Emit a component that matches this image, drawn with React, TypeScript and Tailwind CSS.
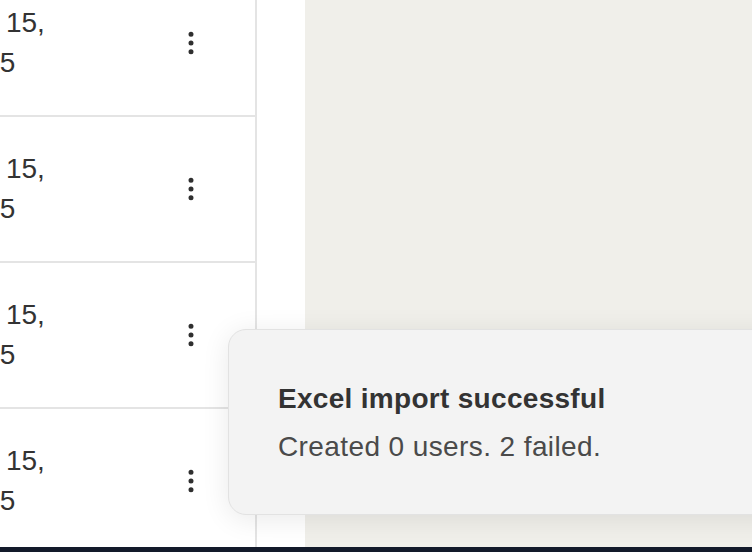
import React from "react";

const Kebab = () => (
  <svg width="30" height="30" viewBox="0 0 24 24" fill="none" stroke="#2f2f2f" strokeWidth="2" strokeLinecap="round" strokeLinejoin="round">
    <circle cx="12" cy="5" r="1" />
    <circle cx="12" cy="12" r="1" />
    <circle cx="12" cy="19" r="1" />
  </svg>
);

export default function App() {
  const rows = [0, 1, 2, 3];
  return (
    <div
      className="relative w-[752px] h-[552px] overflow-hidden bg-white"
      style={{ fontFamily: '"Liberation Sans", Arial, sans-serif' }}
    >
      <div className="flex h-[547px]">
        <div className="w-[305px] bg-white overflow-hidden">
          <div className="w-[257px] h-full border-r-2 border-[#e4e4e4] overflow-hidden">
            <div className="mt-[-29px]">
              {rows.map((r) => (
                <div key={r} className="flex items-center py-[32px] border-b-2 border-[#e4e4e4]">
                  <div className="ml-[-47px] w-[130px] text-[28px] leading-[40px] text-[#333]">
                    Jan 15, 2025
                  </div>
                  <div className="ml-auto mr-[49px] flex items-center justify-center">
                    <Kebab />
                  </div>
                </div>
              ))}
            </div>
          </div>
        </div>
        <div className="flex-1 bg-[#f0efea]" />
      </div>
      <div className="h-[5px] bg-[#131a2a]" />

      <div className="absolute left-[228px] top-[329px] w-[620px] h-[186px] rounded-[18px] border border-[#e2e2e2] bg-[#f3f3f3] shadow-[0_4px_28px_rgba(0,0,0,0.09)] pl-[49px] pt-[49px]">
        <div className="text-[28px] leading-[40px] font-bold tracking-[0.3px] text-[#333]">Excel import successful</div>
        <div className="mt-[8px] text-[28px] leading-[40px] tracking-[0.4px] text-[#4a4a4a]">Created 0 users. 2 failed.</div>
      </div>
    </div>
  );
}
